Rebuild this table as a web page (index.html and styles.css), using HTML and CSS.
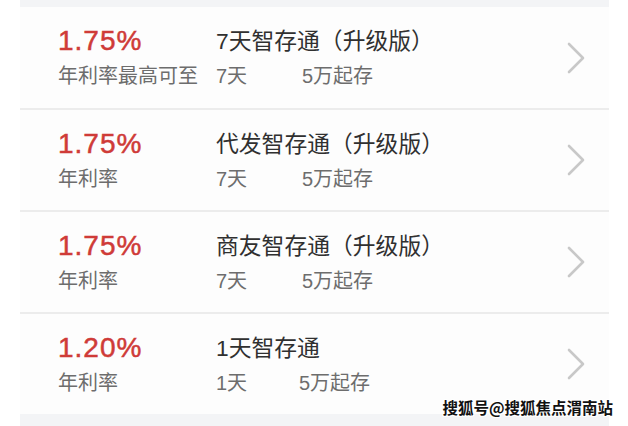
FILE: index.html
```html
<!DOCTYPE html>
<html lang="zh-CN">
<head>
<meta charset="utf-8">
<title>智存通</title>
<link rel="stylesheet" href="styles.css">
</head>
<body>
<div class="page">
  <div class="list">
    <div class="row">
      <div class="rate">
        <div class="pct">1.75%</div>
        <div class="label">年利率最高可至</div>
      </div>
      <div class="info">
        <div class="title">7天智存通（升级版）</div>
        <div class="sub"><span class="term">7天</span><span class="min">5万起存</span></div>
      </div>
      <svg class="chev" width="18" height="32" viewBox="0 0 18 32"><path d="M2 2 L16 16 L2 30" fill="none" stroke="#c8c8c8" stroke-width="2.6" stroke-linecap="round" stroke-linejoin="round"/></svg>
    </div>
    <div class="row">
      <div class="rate">
        <div class="pct">1.75%</div>
        <div class="label">年利率</div>
      </div>
      <div class="info">
        <div class="title">代发智存通（升级版）</div>
        <div class="sub"><span class="term">7天</span><span class="min">5万起存</span></div>
      </div>
      <svg class="chev" width="18" height="32" viewBox="0 0 18 32"><path d="M2 2 L16 16 L2 30" fill="none" stroke="#c8c8c8" stroke-width="2.6" stroke-linecap="round" stroke-linejoin="round"/></svg>
    </div>
    <div class="row">
      <div class="rate">
        <div class="pct">1.75%</div>
        <div class="label">年利率</div>
      </div>
      <div class="info">
        <div class="title">商友智存通（升级版）</div>
        <div class="sub"><span class="term">7天</span><span class="min">5万起存</span></div>
      </div>
      <svg class="chev" width="18" height="32" viewBox="0 0 18 32"><path d="M2 2 L16 16 L2 30" fill="none" stroke="#c8c8c8" stroke-width="2.6" stroke-linecap="round" stroke-linejoin="round"/></svg>
    </div>
    <div class="row">
      <div class="rate">
        <div class="pct">1.20%</div>
        <div class="label">年利率</div>
      </div>
      <div class="info">
        <div class="title">1天智存通</div>
        <div class="sub"><span class="term term-short">1天</span><span class="min">5万起存</span></div>
      </div>
      <svg class="chev" width="18" height="32" viewBox="0 0 18 32"><path d="M2 2 L16 16 L2 30" fill="none" stroke="#c8c8c8" stroke-width="2.6" stroke-linecap="round" stroke-linejoin="round"/></svg>
    </div>
  </div>
  <div class="watermark">搜狐号@搜狐焦点渭南站</div>
</div>
</body>
</html>
```
FILE: styles.css
```css
* { box-sizing: border-box; }
html, body {
  margin: 0;
  padding: 0;
  background: #ffffff;
}
body {
  font-family: "Liberation Sans", "Noto Sans CJK SC", sans-serif;
  width: 628px;
  height: 426px;
  overflow: hidden;
}
.page {
  position: relative;
  height: 426px;
  padding: 0 19px 0 20px;
}
.list {
  background: #f3f4f6;
  padding: 7px 0 12px;
}
.row {
  display: flex;
  align-items: center;
  height: 100px;
  background: #fdfdfd;
  padding: 0 24px 0 38px;
}
.row + .row {
  border-top: 2px solid #ececec;
  height: 102px;
}
.row:first-child { height: 101px; }
.rate {
  width: 158px;
  flex: none;
}
.info {
  flex: 1;
}
.pct {
  font-family: "Liberation Sans", sans-serif;
  font-size: 28px;
  line-height: 32px;
  color: #cf3b38;
  letter-spacing: 1px;
  -webkit-text-stroke: 0.5px #cf3b38;
}
.label {
  font-size: 20px;
  line-height: 28px;
  margin-top: 5px;
  color: #6d6d6d;
}
.title {
  font-size: 22.8px;
  line-height: 32px;
  color: #303030;
}
.sub {
  font-size: 20px;
  line-height: 28px;
  margin-top: 5px;
  color: #6d6d6d;
  display: flex;
}
.term {
  width: 86px;
}
.term-short {
  width: 83px;
}
.chev {
  flex: none;
  display: block;
}
.watermark {
  position: absolute;
  right: 15px;
  bottom: 9px;
  font-family: "Noto Sans CJK SC", sans-serif;
  font-size: 15.5px;
  font-weight: 700;
  line-height: 20px;
  color: #111;
  text-shadow: 1px 0 #fff, -1px 0 #fff, 0 1px #fff, 0 -1px #fff, 1px 1px #fff, -1px -1px #fff, 1px -1px #fff, -1px 1px #fff;
}
```
